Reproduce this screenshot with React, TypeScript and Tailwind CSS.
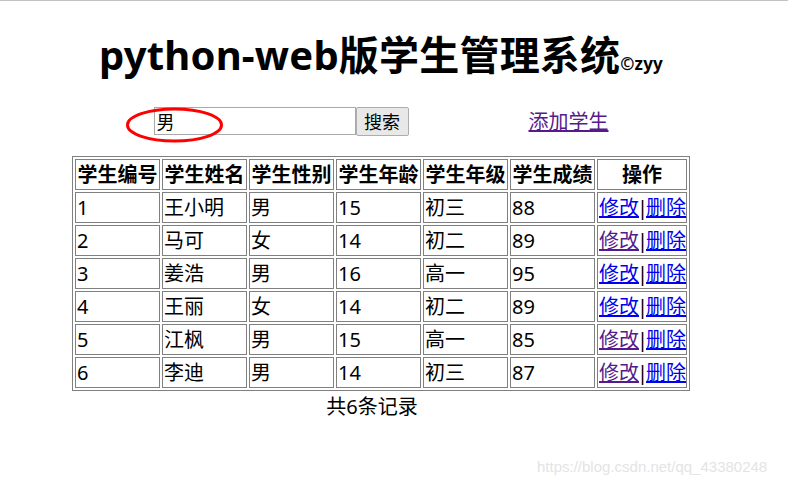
import React from 'react';

type Student = {
    id: number;
    name: string;
    gender: string;
    age: number;
    grade: string;
    score: number;
    visited: boolean;
};

// rows as they appear in the list
const students: Student[] = [
    { id: 1, name: '王小明', gender: '男', age: 15, grade: '初三', score: 88, visited: false },
    { id: 2, name: '马可', gender: '女', age: 14, grade: '初二', score: 89, visited: true },
    { id: 3, name: '姜浩', gender: '男', age: 16, grade: '高一', score: 95, visited: false },
    { id: 4, name: '王丽', gender: '女', age: 14, grade: '初二', score: 89, visited: false },
    { id: 5, name: '江枫', gender: '男', age: 15, grade: '高一', score: 85, visited: true },
    { id: 6, name: '李迪', gender: '男', age: 14, grade: '初三', score: 87, visited: true },
];

const headers = ['学生编号', '学生姓名', '学生性别', '学生年龄', '学生年级', '学生成绩'];

const box = 'border border-[#808080] p-px leading-[27px] h-[31px] whitespace-nowrap';
const cell = `${box} text-left font-normal`;
const head = `${box} text-center font-bold`;

export default function App() {
    return (
        <div
            className="relative min-h-screen bg-white border-t border-[#c3c3c3] text-black text-[20px]"
            style={{ fontFamily: '"Noto Sans", "Noto Sans CJK SC", sans-serif' }}
        >
            <div className="w-[762px] flex flex-col items-center">
                {/* title */}
                <h1 className="mt-[30px] text-[40px] leading-[48px] font-bold whitespace-nowrap tracking-[0.2px]">
                    python-web版学生管理系统
                    <span className="text-[17px] font-bold">©zyy</span>
                </h1>

                {/* search + add */}
                <div className="mt-[19px] flex items-start">
                    <div className="relative">
                        <input
                            type="text"
                            defaultValue="男"
                            className="block w-[202px] h-[28px] border border-[#a9a9a9] px-[2px] text-[18px] leading-[24px] outline-none"
                        />
                        {/* red annotation ring */}
                        <svg
                            className="absolute left-[-29px] top-[0px] pointer-events-none"
                            width="99"
                            height="36"
                            viewBox="0 0 99 36"
                        >
                            <ellipse cx="49.5" cy="18" rx="47" ry="16" fill="none" stroke="#ff0000" strokeWidth="3" />
                        </svg>
                    </div>
                    <button className="w-[53px] h-[29px] border border-[#adadad] bg-[#e8e8e8] text-[18px] leading-[26px] rounded-[2px]">
                        搜索
                    </button>
                    <a href="#" className="ml-[120px] mt-[1px] text-[#551a8b] underline leading-[27px]">
                        添加学生
                    </a>
                </div>

                {/* table */}
                <table className="mt-[20px] w-[618px] table-fixed border border-[#808080] border-separate border-spacing-[2px]">
                    <colgroup>
                        <col className="w-[85px]" />
                        <col className="w-[85px]" />
                        <col className="w-[85px]" />
                        <col className="w-[85px]" />
                        <col className="w-[85px]" />
                        <col className="w-[85px]" />
                        <col className="w-[90px]" />
                    </colgroup>
                    <thead>
                        <tr>
                            {headers.map((h) => (
                                <th key={h} className={head}>
                                    {h}
                                </th>
                            ))}
                            <th className={head}>操作</th>
                        </tr>
                    </thead>
                    <tbody>
                        {students.map((s) => (
                            <tr key={s.id}>
                                <td className={cell}>{s.id}</td>
                                <td className={cell}>{s.name}</td>
                                <td className={cell}>{s.gender}</td>
                                <td className={cell}>{s.age}</td>
                                <td className={cell}>{s.grade}</td>
                                <td className={cell}>{s.score}</td>
                                <td className={cell}>
                                    <a href="#" className={`underline ${s.visited ? 'text-[#551a8b]' : 'text-[#0000ee]'}`}>
                                        修改
                                    </a>
                                    <span className="mx-[-2px]">|</span>
                                    <a href="#" className="underline text-[#0000ee]">
                                        删除
                                    </a>
                                </td>
                            </tr>
                        ))}
                    </tbody>
                </table>

                <p className="mt-[2px] pr-[18px] leading-[27px]">共6条记录</p>
            </div>

            {/* watermark */}
            <span
                className="absolute left-[537px] top-[455px] text-[15px] text-[#e4e4e4]"
                style={{ fontFamily: '"Liberation Sans", Arial, sans-serif' }}
            >
                https://blog.csdn.net/qq_43380248
            </span>
        </div>
    );
}
